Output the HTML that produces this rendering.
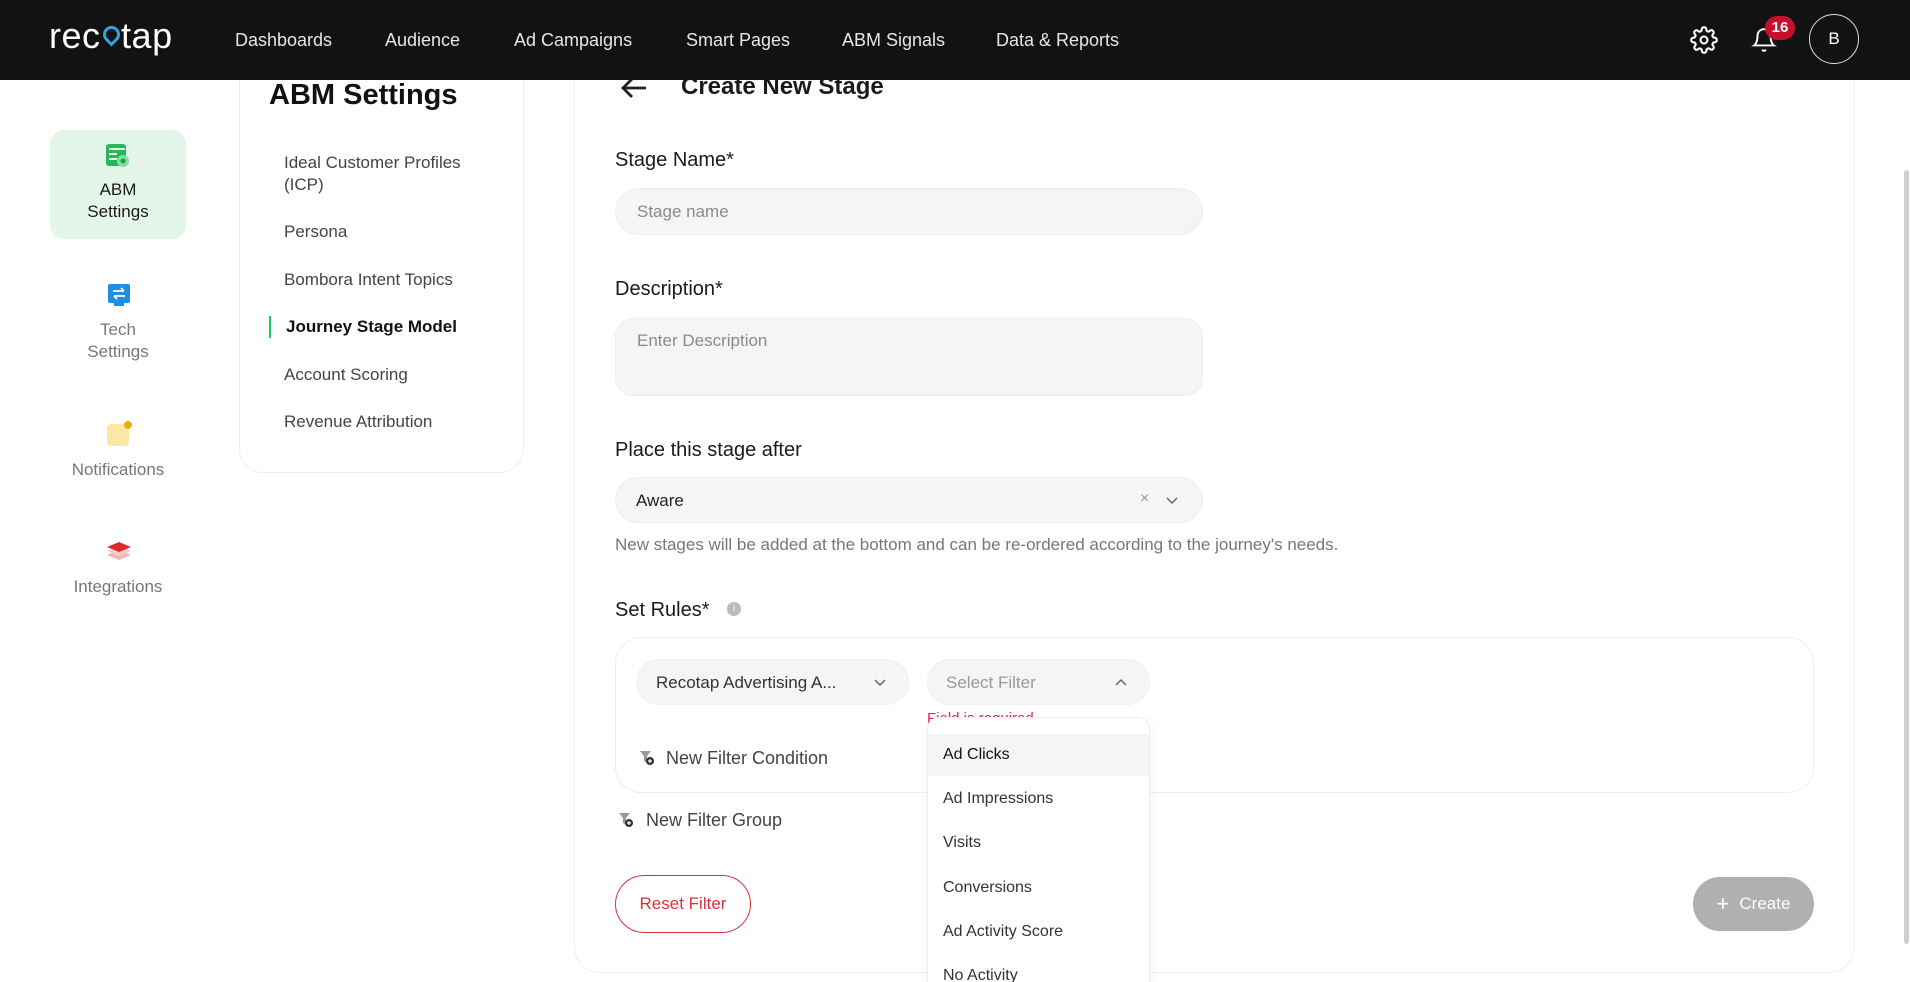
<!DOCTYPE html>
<html><head><meta charset="utf-8"><style>
*{box-sizing:border-box;margin:0;padding:0}
html,body{width:1910px;height:982px;overflow:hidden}
body{background:#fff;font-family:"Liberation Sans",Arial,sans-serif;position:relative;color:#222}
.a{position:absolute;white-space:nowrap}
.hdr{position:absolute;left:0;top:0;width:1910px;height:80px;background:#121212}
.nav{color:#e6e6e6;font-size:18px;top:30px}
.side{color:#777;font-size:17px;text-align:center;width:136px;left:50px;line-height:22px}
.mi{left:284px;font-size:17px;color:#444}
.lbl{left:615px;font-size:20px;color:#1a1a1a;font-weight:500}
.inp{position:absolute;background:#f5f5f5;border:1px solid #efefef;border-radius:24px}
.ph{color:#8a8a8a;font-size:17px}
.dd{font-size:16px;color:#333;left:943px}
</style></head><body>

<div class="a" style="left:50px;top:130px;width:136px;height:109px;background:#e4f6ea;border-radius:14px"></div>
<svg class="a" style="left:105px;top:143px" width="26" height="26" viewBox="0 0 26 26"><rect x="1" y="1" width="20" height="22" rx="3" fill="#2bb55a"/><rect x="4" y="5" width="16" height="2" fill="#e4f6ea"/><rect x="4" y="10" width="8" height="2" fill="#e4f6ea"/><rect x="4" y="15" width="8" height="2" fill="#e4f6ea"/><circle cx="18" cy="18" r="6" fill="#8ad9a2"/><circle cx="18" cy="18" r="2.5" fill="#1e9a48"/></svg>
<div class="a side" style="top:179px;color:#1a1a1a">ABM<br>Settings</div>
<svg class="a" style="left:107px;top:283px" width="24" height="24" viewBox="0 0 24 24"><rect x="1" y="1" width="22" height="19" rx="2" fill="#1e8fe0"/><rect x="7" y="20" width="10" height="3" fill="#1e8fe0"/><path d="M6 8h11M14 5l3 3M18 13H7M10 16l-3-3" stroke="#fff" stroke-width="1.8" fill="none"/></svg>
<div class="a side" style="top:319px">Tech<br>Settings</div>
<div class="a" style="left:107px;top:424px;width:22px;height:22px;background:#fbe8a6;border-radius:4px"></div>
<div class="a" style="left:124px;top:421px;width:8px;height:8px;background:#e8b000;border-radius:50%"></div>
<div class="a side" style="top:459px">Notifications</div>
<svg class="a" style="left:106px;top:538px" width="26" height="26" viewBox="0 0 26 26"><path d="M13 14l12-5-12-5-12 5z" fill="#f4b4b4" transform="translate(0,8)"/><path d="M13 14l12-5-12-5-12 5z" fill="#f8cccc" transform="translate(0,4)"/><path d="M13 14l12-5-12-5-12 5z" fill="#dc2a2a"/></svg>
<div class="a side" style="top:576px">Integrations</div>

<div class="a" style="left:239px;top:40px;width:285px;height:433px;border:1px solid #eee;border-radius:24px;background:#fff"></div>
<div class="a" style="left:269px;top:79px;font-size:29px;font-weight:bold;color:#111">ABM Settings</div>
<div class="a mi" style="top:152px;line-height:22px">Ideal Customer Profiles<br>(ICP)</div>
<div class="a mi" style="top:222px">Persona</div>
<div class="a mi" style="top:270px">Bombora Intent Topics</div>
<div class="a" style="left:269px;top:316px;width:2px;height:22px;background:#22c55e"></div>
<div class="a mi" style="top:317px;left:286px;font-weight:bold;color:#111">Journey Stage Model</div>
<div class="a mi" style="top:365px">Account Scoring</div>
<div class="a mi" style="top:412px">Revenue Attribution</div>

<div class="a" style="left:574px;top:40px;width:1281px;height:933px;border:1px solid #eee;border-radius:26px;background:#fff"></div>
<svg class="a" style="left:620px;top:76px" width="28" height="24" viewBox="0 0 28 24" fill="none" stroke="#222" stroke-width="2.8"><path d="M26 12H3M12 3l-9 9 9 9"/></svg>
<div class="a" style="left:681px;top:73px;font-size:24px;font-weight:bold;color:#1a1a1a">Create New Stage</div>
<div class="a lbl" style="top:149px">Stage Name*</div>
<div class="inp" style="left:615px;top:188px;width:588px;height:47px"></div>
<div class="a ph" style="left:637px;top:202px">Stage name</div>
<div class="a lbl" style="top:278px">Description*</div>
<div class="inp" style="left:615px;top:318px;width:588px;height:78px;border-radius:18px"></div>
<div class="a ph" style="left:637px;top:331px">Enter Description</div>
<div class="a lbl" style="top:439px">Place this stage after</div>
<div class="inp" style="left:615px;top:477px;width:588px;height:46px"></div>
<div class="a" style="left:636px;top:491px;font-size:17px;color:#222">Aware</div>
<div class="a" style="left:1140px;top:490px;font-size:16px;color:#999">×</div>
<svg class="a" style="left:1166px;top:497px" width="12" height="8" viewBox="0 0 12 8" fill="none" stroke="#666" stroke-width="1.5"><path d="M1 1l5 5 5-5"/></svg>
<div class="a" style="left:615px;top:535px;font-size:17px;color:#777">New stages will be added at the bottom and can be re-ordered according to the journey's needs.</div>
<div class="a lbl" style="top:599px">Set Rules*</div>
<div class="a" style="left:727px;top:602px;width:14px;height:14px;border-radius:50%;background:#bbb;color:#fff;font-size:10px;text-align:center;line-height:14px">i</div>

<div class="a" style="left:615px;top:637px;width:1199px;height:156px;border:1px solid #eee;border-radius:26px"></div>
<div class="inp" style="left:636px;top:659px;width:273px;height:46px;border-color:#f0f0f0"></div>
<div class="a" style="left:656px;top:673px;font-size:17px;color:#333">Recotap Advertising A...</div>
<svg class="a" style="left:874px;top:679px" width="12" height="8" viewBox="0 0 12 8" fill="none" stroke="#666" stroke-width="1.5"><path d="M1 1l5 5 5-5"/></svg>
<div class="inp" style="left:927px;top:659px;width:223px;height:46px;border-color:#f0f0f0"></div>
<div class="a" style="left:946px;top:673px;font-size:17px;color:#999">Select Filter</div>
<svg class="a" style="left:1115px;top:678px" width="12" height="8" viewBox="0 0 12 8" fill="none" stroke="#666" stroke-width="1.5"><path d="M1 7l5-5 5 5"/></svg>
<div class="a" style="left:927px;top:710px;font-size:15px;color:#e0245e">Field is required</div>
<svg class="a" style="left:639px;top:750px" width="16" height="16" viewBox="0 0 16 16"><path d="M1 1h11l-4 5v7l-3-2V6z" fill="#999"/><circle cx="11" cy="11" r="4" fill="#333"/><path d="M11 9v4M9 11h4" stroke="#fff" stroke-width="1.2"/></svg>
<div class="a" style="left:666px;top:748px;font-size:18px;color:#444">New Filter Condition</div>
<svg class="a" style="left:618px;top:812px" width="16" height="16" viewBox="0 0 16 16"><path d="M1 1h11l-4 5v7l-3-2V6z" fill="#999"/><circle cx="11" cy="11" r="4" fill="#333"/><path d="M11 9v4M9 11h4" stroke="#fff" stroke-width="1.2"/></svg>
<div class="a" style="left:646px;top:810px;font-size:18px;color:#444">New Filter Group</div>

<div class="a" style="left:927px;top:717px;width:223px;height:265px;background:#fff;border:1px solid #eee;border-bottom:none;border-radius:12px 12px 0 0;box-shadow:0 4px 12px rgba(0,0,0,0.06);overflow:hidden"></div>
<div class="a" style="left:928px;top:734px;width:221px;height:42px;background:#f5f5f5"></div>
<div class="a dd" style="top:746px;color:#111">Ad Clicks</div>
<div class="a dd" style="top:790px">Ad Impressions</div>
<div class="a dd" style="top:834px">Visits</div>
<div class="a dd" style="top:879px">Conversions</div>
<div class="a dd" style="top:923px">Ad Activity Score</div>
<div class="a dd" style="top:967px">No Activity</div>

<div class="a" style="left:615px;top:875px;width:136px;height:58px;border:1.5px solid #d8323c;border-radius:29px;color:#d8323c;font-size:17px;text-align:center;line-height:55px">Reset Filter</div>
<div class="a" style="left:1693px;top:877px;width:121px;height:54px;background:#b0b0b0;border-radius:27px;color:#fff;font-size:17px;text-align:center;line-height:54px"><span style="font-size:22px;vertical-align:-2px;margin-right:10px">+</span>Create</div>

<div class="a" style="left:1904px;top:170px;width:5px;height:774px;background:#cfcfcf;border-radius:3px"></div>

<div class="hdr"></div>
<div class="a" style="left:49px;top:15px;font-size:36px;color:#fff;letter-spacing:0.5px">rec<span style="position:relative;color:#121212">o<span style="position:absolute;left:2px;top:11px;width:17px;height:17px;border:3.5px solid #29a8e0;border-radius:50% 50% 50% 0;transform:rotate(-45deg)"></span></span>tap</div>
<div class="a nav" style="left:235px">Dashboards</div>
<div class="a nav" style="left:385px">Audience</div>
<div class="a nav" style="left:514px">Ad Campaigns</div>
<div class="a nav" style="left:686px">Smart Pages</div>
<div class="a nav" style="left:842px">ABM Signals</div>
<div class="a nav" style="left:996px">Data &amp; Reports</div>
<svg class="a" style="left:1690px;top:26px" width="28" height="28" viewBox="0 0 24 24" fill="none" stroke="#fff" stroke-width="1.8"><circle cx="12" cy="12" r="3"/><path d="M19.4 15a1.65 1.65 0 0 0 .33 1.82l.06.06a2 2 0 1 1-2.83 2.83l-.06-.06a1.65 1.65 0 0 0-1.82-.33 1.65 1.65 0 0 0-1 1.51V21a2 2 0 1 1-4 0v-.09A1.65 1.65 0 0 0 9 19.4a1.65 1.65 0 0 0-1.82.33l-.06.06a2 2 0 1 1-2.83-2.83l.06-.06A1.65 1.65 0 0 0 4.68 15a1.650 1.65 0 0 0-1.51-1H3a2 2 0 1 1 0-4h.09A1.65 1.65 0 0 0 4.6 9a1.65 1.65 0 0 0-.33-1.82l-.06-.06a2 2 0 1 1 2.83-2.83l.06.06A1.65 1.65 0 0 0 9 4.68a1.65 1.65 0 0 0 1-1.51V3a2 2 0 1 1 4 0v.09a1.65 1.65 0 0 0 1 1.51 1.65 1.65 0 0 0 1.82-.33l.06-.06a2 2 0 1 1 2.83 2.83l-.06.06A1.65 1.65 0 0 0 19.4 9a1.65 1.65 0 0 0 1.51 1H21a2 2 0 1 1 0 4h-.09a1.65 1.65 0 0 0-1.51 1z"/></svg>
<svg class="a" style="left:1751px;top:27px" width="26" height="26" viewBox="0 0 24 24" fill="none" stroke="#fff" stroke-width="1.8"><path d="M18 8A6 6 0 0 0 6 8c0 7-3 9-3 9h18s-3-2-3-9"/><path d="M13.7 21a2 2 0 0 1-3.4 0"/></svg>
<div class="a" style="left:1765px;top:16px;width:30px;height:24px;border-radius:12px;background:#c8102e;color:#fff;font-size:15px;font-weight:bold;text-align:center;line-height:24px">16</div>
<div class="a" style="left:1809px;top:14px;width:50px;height:50px;border:1.5px solid #ddd;border-radius:50%;color:#fff;font-size:17px;text-align:center;line-height:47px">B</div>
</body></html>
